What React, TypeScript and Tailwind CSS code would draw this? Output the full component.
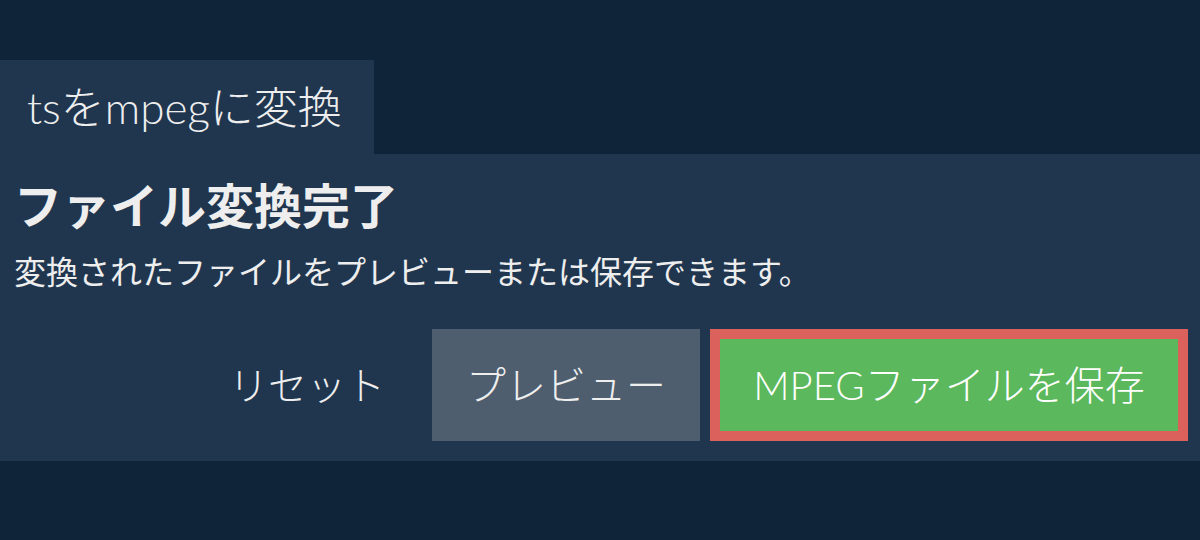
import React from 'react';

const FONT = "font-['Lato','Noto_Sans_CJK_JP',sans-serif]";

export default function App() {
  return (
    <div className={`${FONT} w-[1200px] h-[540px] bg-[#0f2339] text-[#eeeeee] pt-[60px]`}>
      {/* tab */}
      <div className="flex">
        <div className="bg-[#20364e] h-[94px] w-[374px] pl-[27px] flex items-center text-[44px] font-light leading-none">
          tsをmpegに変換
        </div>
      </div>

      {/* panel */}
      <div className="bg-[#20364e] h-[307px] px-[14px] pt-[24px]">
        <h1 className="text-[48px] font-bold leading-[56px]">ファイル変換完了</h1>
        <p className="text-[32px] leading-[40px] mt-[18px]">
          変換されたファイルをプレビューまたは保存できます。
        </p>

        <div className="flex justify-end gap-[10px] mt-[37px] -mr-[2px]">
          <button className="h-[112px] pl-[40px] pr-[37px] text-[39px] font-light text-[#eeeeee]">
            リセット
          </button>
          <button className="h-[112px] w-[268px] bg-[#4e5e6e] text-[40px] font-light text-[#eeeeee]">
            プレビュー
          </button>
          <button className="h-[112px] w-[478px] border-[10px] border-[#db615d] bg-[#5cb85c] text-[40px] font-light text-white">
            MPEGファイルを保存
          </button>
        </div>
      </div>
    </div>
  );
}
